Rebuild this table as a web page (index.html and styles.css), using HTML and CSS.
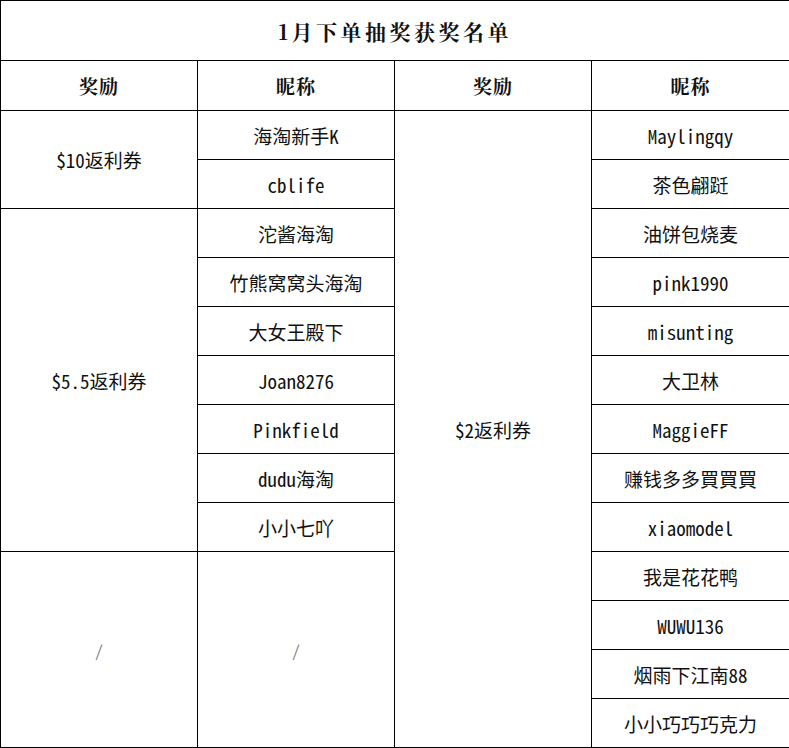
FILE: index.html
```html
<!DOCTYPE html>
<html lang="zh-CN">
<head>
<meta charset="utf-8">
<title>1月下单抽奖获奖名单</title>
<link rel="stylesheet" href="styles.css">
</head>
<body>
<table class="list">
  <colgroup>
    <col class="c1"><col class="c2"><col class="c3"><col class="c4">
  </colgroup>
  <thead>
    <tr class="title-row"><th colspan="4" class="title">1月下单抽奖获奖名单</th></tr>
    <tr class="head-row"><th>奖励</th><th>昵称</th><th>奖励</th><th>昵称</th></tr>
  </thead>
  <tbody>
    <tr><td rowspan="2">$10返利券</td><td>海淘新手K</td><td rowspan="13">$2返利券</td><td>Maylingqy</td></tr>
    <tr><td>cblife</td><td>茶色翩跹</td></tr>
    <tr><td rowspan="7">$5.5返利券</td><td>沱酱海淘</td><td>油饼包烧麦</td></tr>
    <tr><td>竹熊窝窝头海淘</td><td>pink1990</td></tr>
    <tr><td>大女王殿下</td><td>misunting</td></tr>
    <tr><td>Joan8276</td><td>大卫林</td></tr>
    <tr><td>Pinkfield</td><td>MaggieFF</td></tr>
    <tr><td>dudu海淘</td><td>赚钱多多買買買</td></tr>
    <tr><td>小小七吖</td><td>xiaomodel</td></tr>
    <tr><td rowspan="4" class="na">/</td><td rowspan="4" class="na">/</td><td>我是花花鸭</td></tr>
    <tr><td>WUWU136</td></tr>
    <tr><td>烟雨下江南88</td></tr>
    <tr><td>小小巧巧巧克力</td></tr>
  </tbody>
</table>
</body>
</html>
```
FILE: styles.css
```css
html, body {
  margin: 0;
  padding: 0;
  background: #fff;
}

.list {
  border-collapse: collapse;
  table-layout: fixed;
  width: 789px;
  color: #111;
  font-family: "Noto Sans Mono CJK SC", "Liberation Mono", "Noto Sans CJK SC", monospace;
  font-size: 19px;
}

.c1, .c2, .c3 { width: 197px; }
.c4 { width: 198px; }

.list th,
.list td {
  border: 1px solid #000;
  text-align: center;
  vertical-align: middle;
  padding: 0;
}

.list td {
  height: 48px;
}

.title-row th {
  height: 59px;
}

.head-row th {
  height: 49px;
}

.title {
  font-family: "Noto Serif CJK SC", "Noto Sans CJK SC", serif;
  font-size: 21px;
  font-weight: 700;
  letter-spacing: 3.5px;
}

.head-row th {
  font-family: "Noto Serif CJK SC", "Noto Sans CJK SC", serif;
  font-size: 19px;
  font-weight: 700;
  letter-spacing: 1px;
}

.na {
  color: #777;
  font-size: 16px;
}
```
